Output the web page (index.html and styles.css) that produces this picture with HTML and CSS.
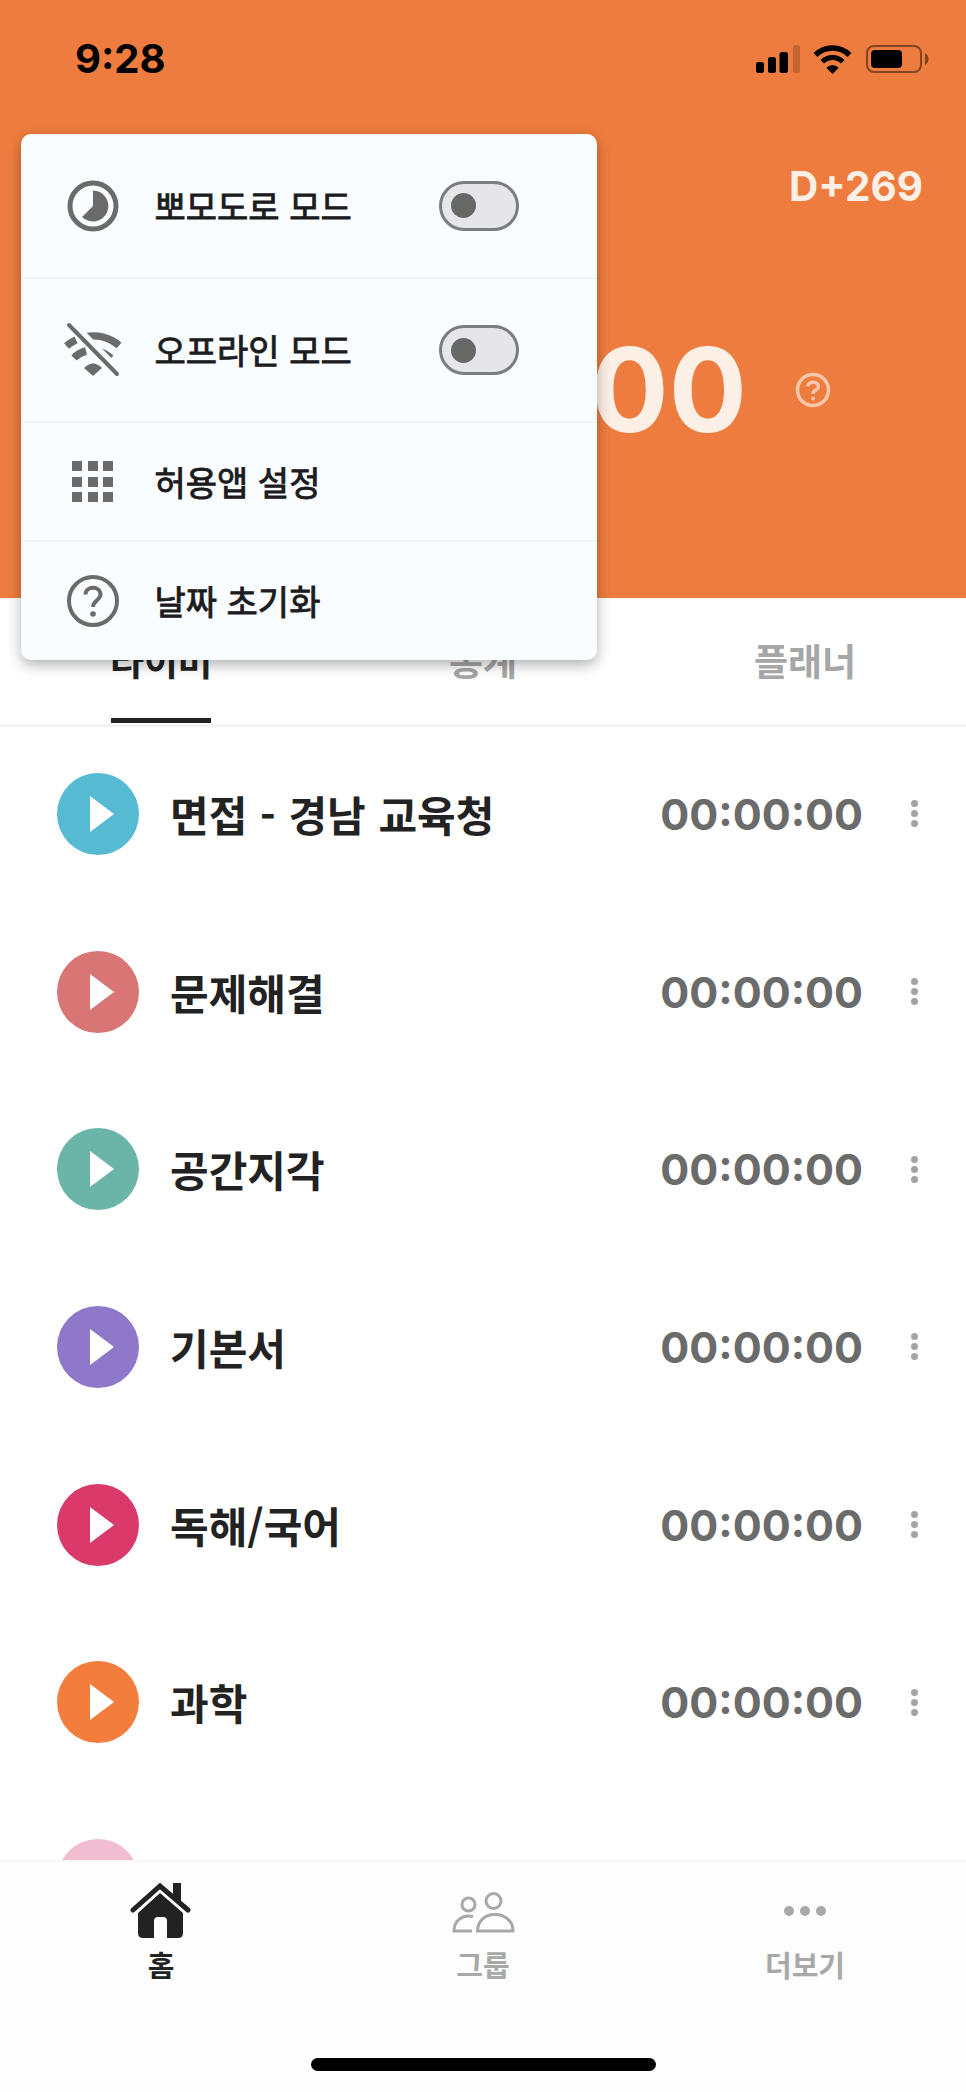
FILE: index.html
```html
<!DOCTYPE html>
<html lang="ko">
<head>
<meta charset="utf-8">
<title>Timer</title>
<link rel="stylesheet" href="styles.css">
</head>
<body>
<div class="app">
  <header class="header">
    <div class="status">
      <span class="clock">9:28</span>
      <div class="status-icons">
        <svg class="ic-signal" viewBox="0 0 44 28"><rect x="0" y="17" width="8" height="11" rx="2.5"/><rect x="12" y="12" width="8" height="16" rx="2.5"/><rect x="23.500" y="7" width="8.500" height="21" rx="2.500"/><rect class="dim" x="37" y="0" width="7" height="28" rx="2"/></svg>
        <svg class="ic-wifi" viewBox="0 0 39 29"><path class="wifi-arc" d="M2.500 10A24 24 0 0 1 36.500 10"/><path class="wifi-arc2" d="M9.250 16.750A14.500 14.500 0 0 1 29.750 16.750"/><path d="M19.500 29L13.300 22.700Q19.500 17.300 25.700 22.700Z"/></svg>
        <svg class="ic-batt" viewBox="0 0 63 28"><rect class="batt-frame" x="1" y="1" width="54" height="26" rx="7"/><rect x="5" y="5" width="31" height="18" rx="4"/><path class="batt-nub" d="M59 8Q62.500 10 62.500 14Q62.500 18 59 20Z"/></svg>
      </div>
    </div>
    <div class="dday">D+269</div>
    <div class="total">
      <span class="total-time">00:00:00</span>
      <svg class="ic-help-light" viewBox="0 0 36 36"><circle cx="18" cy="18" r="15.500"/><path d="M12.800 14.500C12.800 8.800 23.400 8.800 23.400 14.500C23.400 18 18 18 18 22"/><circle class="help-dot" cx="18" cy="26.500" r="2"/></svg>
    </div>
  </header>

  <nav class="tabs">
    <div class="tab tab-on"><span class="tab-label">타이머</span></div>
    <div class="tab"><span class="tab-label">통계</span></div>
    <div class="tab"><span class="tab-label">플래너</span></div>
  </nav>

  <main class="list">
    <div class="row">
      <span class="play c-blue"><svg viewBox="0 0 24 36"><path d="M0 0L24 18L0 36Z"/></svg></span>
      <span class="name">면접 - 경남 교육청</span>
      <span class="time">00:00:00</span>
      <span class="more"><i></i><i></i><i></i></span>
    </div>
    <div class="row">
      <span class="play c-red"><svg viewBox="0 0 24 36"><path d="M0 0L24 18L0 36Z"/></svg></span>
      <span class="name">문제해결</span>
      <span class="time">00:00:00</span>
      <span class="more"><i></i><i></i><i></i></span>
    </div>
    <div class="row">
      <span class="play c-teal"><svg viewBox="0 0 24 36"><path d="M0 0L24 18L0 36Z"/></svg></span>
      <span class="name">공간지각</span>
      <span class="time">00:00:00</span>
      <span class="more"><i></i><i></i><i></i></span>
    </div>
    <div class="row">
      <span class="play c-purple"><svg viewBox="0 0 24 36"><path d="M0 0L24 18L0 36Z"/></svg></span>
      <span class="name">기본서</span>
      <span class="time">00:00:00</span>
      <span class="more"><i></i><i></i><i></i></span>
    </div>
    <div class="row">
      <span class="play c-magenta"><svg viewBox="0 0 24 36"><path d="M0 0L24 18L0 36Z"/></svg></span>
      <span class="name">독해/국어</span>
      <span class="time">00:00:00</span>
      <span class="more"><i></i><i></i><i></i></span>
    </div>
    <div class="row">
      <span class="play c-orange"><svg viewBox="0 0 24 36"><path d="M0 0L24 18L0 36Z"/></svg></span>
      <span class="name">과학</span>
      <span class="time">00:00:00</span>
      <span class="more"><i></i><i></i><i></i></span>
    </div>
    <div class="row">
      <span class="play c-pink"></span>
    </div>
  </main>

  <footer class="nav">
    <div class="nav-items">
      <div class="nav-item nav-on">
        <svg class="nav-icon" viewBox="121 1883 80 56"><path class="home-fill" d="M160 1893L183 1913V1933Q183 1938 178 1938H167V1921Q167 1917 163 1917H158Q154 1917 154 1921V1938H143Q138 1938 138 1933V1913Z"/><path class="home-roof" d="M133 1910L160 1886L188 1910"/><path class="home-fill" d="M173 1883H181V1904L173 1897Z"/></svg>
        <span class="nav-label">홈</span>
      </div>
      <div class="nav-item">
        <svg class="nav-icon group" viewBox="443 1883 80 56"><circle cx="468.500" cy="1904.500" r="6.500"/><circle cx="493.500" cy="1901" r="7.500"/><path d="M473 1916.500C462 1914 454 1921 454 1931H472"/><path d="M495 1914.500C484 1914.500 477.500 1922 477.500 1931H513C513 1922 506 1914.500 495 1914.500Z"/></svg>
        <span class="nav-label">그룹</span>
      </div>
      <div class="nav-item">
        <svg class="nav-icon dots" viewBox="765 1883 80 56"><circle cx="789" cy="1911" r="5"/><circle cx="805" cy="1911" r="5"/><circle cx="821" cy="1911" r="5"/></svg>
        <span class="nav-label">더보기</span>
      </div>
    </div>
    <div class="home-bar"></div>
  </footer>

  <aside class="menu">
    <div class="menu-row menu-first">
      <span class="menu-icon"><svg viewBox="0 0 56 56"><circle class="stroke5" cx="28" cy="28" r="23"/><path class="fill" d="M28 12.500A15.500 15.500 0 1 1 17 39L28 28Z"/></svg></span>
      <span class="menu-text">뽀모도로 모드</span>
      <span class="toggle"><span class="knob"></span></span>
    </div>
    <div class="menu-row menu-tall">
      <span class="menu-icon"><svg viewBox="0 0 56 56"><g class="wifi-off"><path d="M20 14.800A40 40 0 0 1 54 23.500"/><path d="M1.500 24A40 40 0 0 1 11 17.800"/><path d="M9 36A26 26 0 0 1 21 29"/><path class="wifi-thin" d="M36 29.300A26 26 0 0 1 46.400 35.600"/></g><path class="fill" d="M28 54L19 46Q28 37 37 46Z"/><path class="wifi-gap" d="M5.500 1.500L53.500 50.500"/><path class="wifi-line" d="M4 3L52 52"/></svg></span>
      <span class="menu-text">오프라인 모드</span>
      <span class="toggle"><span class="knob"></span></span>
    </div>
    <div class="menu-row">
      <span class="menu-icon"><span class="grid"><i></i><i></i><i></i><i></i><i></i><i></i><i></i><i></i><i></i></span></span>
      <span class="menu-text">허용앱 설정</span>
    </div>
    <div class="menu-row menu-last">
      <span class="menu-icon"><svg viewBox="0 0 56 56"><circle class="stroke4" cx="28" cy="28" r="24"/><path class="stroke4" d="M20.500 21.500C20.500 12.500 35.500 12.500 35.500 21.500C35.500 27 28 27.500 28 34"/><circle class="fill" cx="28" cy="41" r="2.800"/></svg></span>
      <span class="menu-text">날짜 초기화</span>
    </div>
  </aside>
</div>
</body>
</html>
```
FILE: styles.css
```css
* { box-sizing: border-box; }
html, body { margin: 0; padding: 0; background: #fff; }
body { font-family: "Noto Sans CJK KR", "Noto Sans", sans-serif; }
.app { position: relative; width: 966px; height: 2092px; overflow: hidden; display: flex; flex-direction: column; }

.header { flex: none; height: 598px; background: #ee7c3e; display: flex; flex-direction: column; }
.status { height: 118px; display: flex; align-items: center; justify-content: space-between; padding: 0 37px 0 75px; }
.clock { font-family: Inter, sans-serif; font-weight: 700; font-size: 40px; line-height: 1; color: #000; letter-spacing: 0; }
.status-icons { display: flex; align-items: center; }
.ic-signal { width: 44px; height: 28px; display: block; margin-right: 13px; }
.ic-signal .dim { fill: #000; opacity: .18; }
.ic-wifi { width: 39px; height: 29px; display: block; margin-right: 14px; }
.wifi-arc { fill: none; stroke: #000; stroke-width: 5.500px; }
.wifi-arc2 { fill: none; stroke: #000; stroke-width: 5px; }
.ic-batt { width: 63px; height: 28px; display: block; }
.batt-frame { fill: none; stroke: #000; stroke-opacity: .45; stroke-width: 2px; }
.batt-nub { opacity: .45; }

.dday { height: 138px; line-height: 138px; text-align: right; padding-right: 43px; font-family: Inter, sans-serif; font-weight: 700; font-size: 40.500px; color: #fcefe6; }
.total { margin-top: 69px; height: 130px; display: flex; align-items: center; justify-content: flex-end; padding-right: 135px; }
.total-time { font-family: Inter, sans-serif; font-weight: 700; font-size: 116px; line-height: 130px; color: #fcefe6; white-space: nowrap; }
.ic-help-light { width: 36px; height: 36px; margin-left: 48px; display: block; flex: none; }
.ic-help-light circle { fill: none; stroke: #fcefe6; stroke-opacity: .65; stroke-width: 3.500px; }
.ic-help-light path { fill: none; stroke: #fcefe6; stroke-opacity: .65; stroke-width: 3.500px; }
.ic-help-light .help-dot { fill: #fcefe6; fill-opacity: .65; stroke: none; }

.tabs { flex: none; height: 129px; display: flex; border-bottom: 3px solid #f3f3f7; background: #fff; }
.tab { flex: 1; display: flex; align-items: center; justify-content: center; padding-bottom: 3px; }
.tab-label { display: block; font-size: 37px; font-weight: 700; line-height: 52px; color: #a6a6a6; }
.tab-on .tab-label { color: #222; }
.tab-on { position: relative; }
.tab-on::after { content: ""; position: absolute; left: 111px; width: 100px; bottom: 1px; height: 5px; background: #222; }

.list { flex: 1; min-height: 0; overflow: hidden; margin-top: -2px; }
.row { height: 177.700px; display: flex; align-items: center; padding: 0 47px 0 57px; }
.play { flex: none; width: 82px; height: 82px; border-radius: 50%; display: flex; align-items: center; justify-content: center; }
.play svg { width: 24px; height: 36px; display: block; fill: #fff; margin-left: 8px; }
.c-blue { background: #56bad3; }
.c-red { background: #d87675; }
.c-teal { background: #6bb5a8; }
.c-purple { background: #8e78c9; }
.c-magenta { background: #d93a69; }
.c-orange { background: #f27d3d; }
.c-pink { background: #f0bdd1; }
.name { margin-left: 31px; font-size: 42px; font-weight: 700; line-height: 60px; color: #222; word-spacing: 1px; white-space: nowrap; }
.time { margin-left: auto; font-family: Inter, sans-serif; font-size: 43px; font-weight: 700; line-height: 60px; color: #6b6b6b; white-space: nowrap; }
.more { width: 8px; margin-left: 48px; display: flex; flex-direction: column; gap: 3px; }
.more i { display: block; width: 7px; height: 7px; border-radius: 50%; background: #a3a3a3; }

.nav { flex: none; height: 232px; background: #fdfdfd; border-top: 2px solid #f7f7f7; display: flex; flex-direction: column; align-items: center; position: relative; }
.nav-items { width: 100%; display: flex; padding-top: 21px; }
.nav-item { flex: 1; display: flex; flex-direction: column; align-items: center; }
.nav-icon { width: 80px; height: 56px; display: block; }
.home-fill { fill: #222; }
.home-roof { fill: none; stroke: #222; stroke-width: 5px; stroke-linecap: round; stroke-linejoin: miter; }
.group circle, .group path { fill: none; stroke: #a8a8a8; stroke-width: 3px; }
.dots { fill: #a8a8a8; }
.nav-label { margin-top: 8px; font-size: 29px; font-weight: 700; line-height: 34px; color: #a8a8a8; }
.nav-on .nav-label { color: #222; }
.home-bar { margin-top: 77px; width: 345px; height: 13px; border-radius: 7px; background: #000; }

.menu { position: absolute; left: 20.500px; top: 134px; width: 576.500px; background: #fafdff; border-radius: 10px; box-shadow: 0 5px 14px rgba(0,0,0,.3); display: flex; flex-direction: column; }
.menu-row { height: 119px; display: flex; align-items: center; padding-left: 44px; border-bottom: 2px solid #f2f3f6; }
.menu-first { height: 145px; }
.menu-tall { height: 144px; }
.menu-last { height: 118px; border-bottom: 0; }
.menu-icon { flex: none; width: 56px; height: 56px; display: flex; align-items: center; justify-content: center; }
.menu-icon svg { width: 56px; height: 56px; display: block; overflow: visible; }
.stroke5 { fill: none; stroke: #6b6b6b; stroke-width: 5px; }
.stroke4 { fill: none; stroke: #6b6b6b; stroke-width: 4px; }
.fill { fill: #6b6b6b; }
.wifi-off path { fill: none; stroke: #6b6b6b; stroke-width: 7.500px; }
.wifi-off .wifi-thin { stroke-width: 6px; }
.wifi-gap { stroke: #fafdff; stroke-width: 10px; fill: none; }
.wifi-line { stroke: #6b6b6b; stroke-width: 4px; stroke-linecap: round; fill: none; }
.grid { display: grid; grid-template-columns: repeat(3, 10px); grid-auto-rows: 10px; gap: 5.500px; }
.grid i { display: block; background: #6b6b6b; }
.menu-text { margin-left: 34px; font-size: 34px; font-weight: 400; -webkit-text-stroke: 0.9px #1c1c1e; line-height: 48px; color: #1c1c1e; white-space: nowrap; }
.toggle { position: absolute; left: 418.500px; width: 80px; height: 50px; border-radius: 25px; border: 3px solid #7a7d7d; background: #e5e5ea; display: flex; align-items: center; padding-left: 9px; }
.knob { display: block; width: 25px; height: 25px; border-radius: 50%; background: #666866; }
```
